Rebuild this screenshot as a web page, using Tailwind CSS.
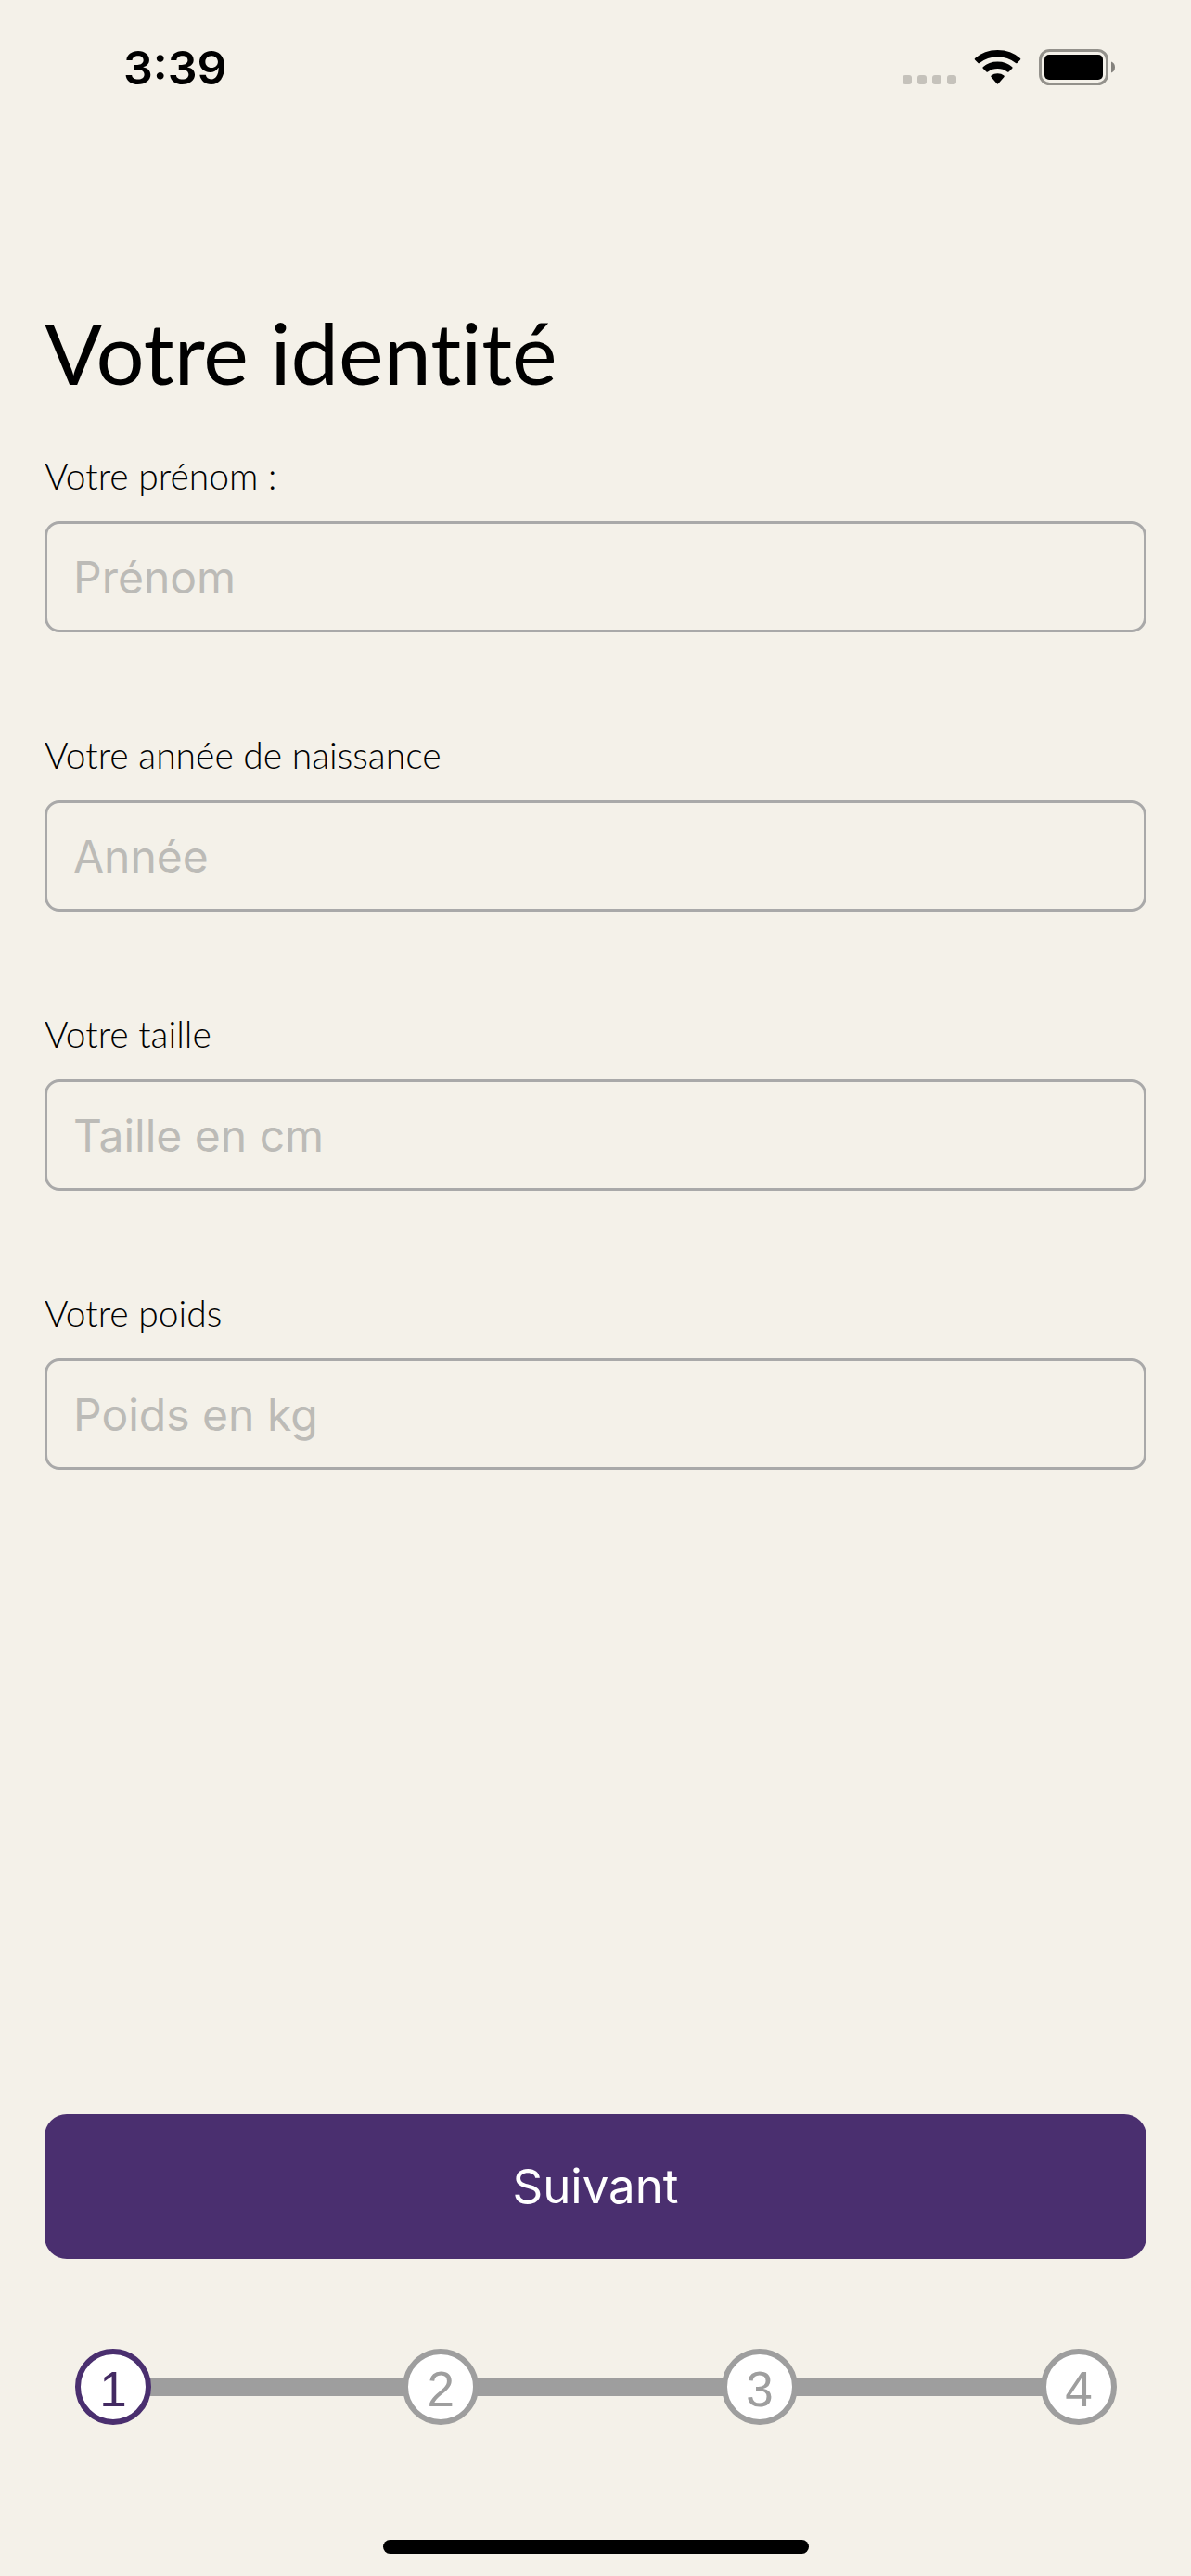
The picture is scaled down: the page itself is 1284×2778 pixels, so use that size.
<!DOCTYPE html>
<html lang="fr">
<head>
  <meta charset="UTF-8" />
  <title>Votre identité</title>
  <meta name="viewport" content="width=device-width, initial-scale=1" />
  <script src="https://cdn.jsdelivr.net/npm/@tailwindcss/browser@4"></script>
</head>
<body class="bg-[#f4f1e9] min-h-screen flex flex-col text-black font-[Inter,sans-serif]">

  <!-- Status bar -->
  <header class="flex items-center justify-between h-[146px] pl-[133px] pr-[82px]">
    <span class="text-[50px] leading-none font-semibold">3:39</span>
    <div class="flex items-center gap-[19px]">
      <svg class="w-[128px] h-[40px]" viewBox="0 0 128 40">
        <g fill="#c5c2bb">
          <rect x="0" y="28" width="10" height="10" rx="3" />
          <rect x="16" y="28" width="10" height="10" rx="3" />
          <rect x="32" y="28" width="10" height="10" rx="3" />
          <rect x="48" y="28" width="10" height="10" rx="3" />
        </g>
        <path d="M78 11.500Q77.300 10.800 78 10Q88 1 102.500 1T127 10Q127.700 10.800 127 11.500L123.500 15Q122.800 15.700 122 15Q113.500 8.200 102.500 8.200T83 15Q82.200 15.700 81.500 15Z" />
        <path d="M86.700 20.700Q86 20 86.700 19.200Q93 13.600 102.500 13.600T118.300 19.200Q119 20 118.300 20.700L114.500 24.400Q113.800 25 113 24.400Q108.500 21 102.500 21T92 24.400Q91.200 25 90.500 24.400Z" />
        <path d="M95.500 30Q94.800 29.300 95.600 28.600Q98.500 26.200 102.500 26.200T109.400 28.600Q110.200 29.300 109.500 30L103.200 37.300Q102.500 38 101.800 37.300Z" />
      </svg>
      <svg class="w-[82px] h-[40px]" viewBox="0 0 82 40">
        <rect x="1.500" y="1.500" width="72" height="36" rx="10" fill="none" stroke="#93918b" stroke-width="3" />
        <rect x="6" y="6" width="63" height="27" rx="5" />
        <path d="M78 13.500Q82 15 82 19.500T78 25.500Z" fill="#84827d" />
      </svg>
    </div>
  </header>

  <main class="flex-1 flex flex-col px-12">
    <h1 class="mt-[178px] text-[92px] leading-[112px] font-[Lato,sans-serif] [font-variant-ligatures:none]">Votre identité</h1>

    <form class="flex-1 flex flex-col mt-[54px]">
      <div class="flex flex-col gap-[109px]">
        <div class="flex flex-col gap-[26px]">
          <label for="prenom" class="text-[39px] leading-[46px] font-light font-[Lato,sans-serif]">Votre prénom :</label>
          <input id="prenom" type="text" placeholder="Prénom" class="w-full h-[120px] px-7 border-3 border-[#a9a9a9] rounded-2xl text-[48px] placeholder:text-[#bcbbb7]" />
        </div>
        <div class="flex flex-col gap-[26px]">
          <label for="annee" class="text-[39px] leading-[46px] font-light font-[Lato,sans-serif]">Votre année de naissance</label>
          <input id="annee" type="text" inputmode="numeric" placeholder="Année" class="w-full h-[120px] px-7 border-3 border-[#a9a9a9] rounded-2xl text-[48px] placeholder:text-[#bcbbb7]" />
        </div>
        <div class="flex flex-col gap-[26px]">
          <label for="taille" class="text-[39px] leading-[46px] font-light font-[Lato,sans-serif]">Votre taille</label>
          <input id="taille" type="text" inputmode="numeric" placeholder="Taille en cm" class="w-full h-[120px] px-7 border-3 border-[#a9a9a9] rounded-2xl text-[48px] placeholder:text-[#bcbbb7]" />
        </div>
        <div class="flex flex-col gap-[26px]">
          <label for="poids" class="text-[39px] leading-[46px] font-light font-[Lato,sans-serif]">Votre poids</label>
          <input id="poids" type="text" inputmode="numeric" placeholder="Poids en kg" class="w-full h-[120px] px-7 border-3 border-[#a9a9a9] rounded-2xl text-[48px] placeholder:text-[#bcbbb7]" />
        </div>
      </div>

      <button type="submit" class="mt-auto w-full h-[156px] rounded-3xl bg-[#4a2f6f] text-white text-[51px]">Suivant</button>
    </form>

    <!-- Steps -->
    <ol class="flex items-center mt-[97px] pl-[33px] pr-8 text-[53px] leading-none font-['Liberation_Sans',sans-serif] text-[#9e9e9e]">
      <li class="relative z-10 size-[82px] shrink-0 flex items-center justify-center pt-1 rounded-full border-6 border-[#4a2f6f] bg-white text-[#432a62]" aria-current="step">1</li>
      <li class="flex-[271] -mx-1 h-[19px] bg-[#9e9e9e]" aria-hidden="true"></li>
      <li class="relative z-10 size-[82px] shrink-0 flex items-center justify-center pt-1 rounded-full border-6 border-[#9e9e9e] bg-white">2</li>
      <li class="flex-[262] -mx-1 h-[19px] bg-[#9e9e9e]" aria-hidden="true"></li>
      <li class="relative z-10 size-[82px] shrink-0 flex items-center justify-center pt-1 rounded-full border-6 border-[#9e9e9e] bg-white">3</li>
      <li class="flex-[262] -mx-1 h-[19px] bg-[#9e9e9e]" aria-hidden="true"></li>
      <li class="relative z-10 size-[82px] shrink-0 flex items-center justify-center pt-1 rounded-full border-6 border-[#9e9e9e] bg-white">4</li>
    </ol>
  </main>

  <!-- Home indicator -->
  <div class="mt-[124px] mb-6 mx-auto w-[459px] h-[15px] rounded-full bg-black"></div>

</body>
</html>
